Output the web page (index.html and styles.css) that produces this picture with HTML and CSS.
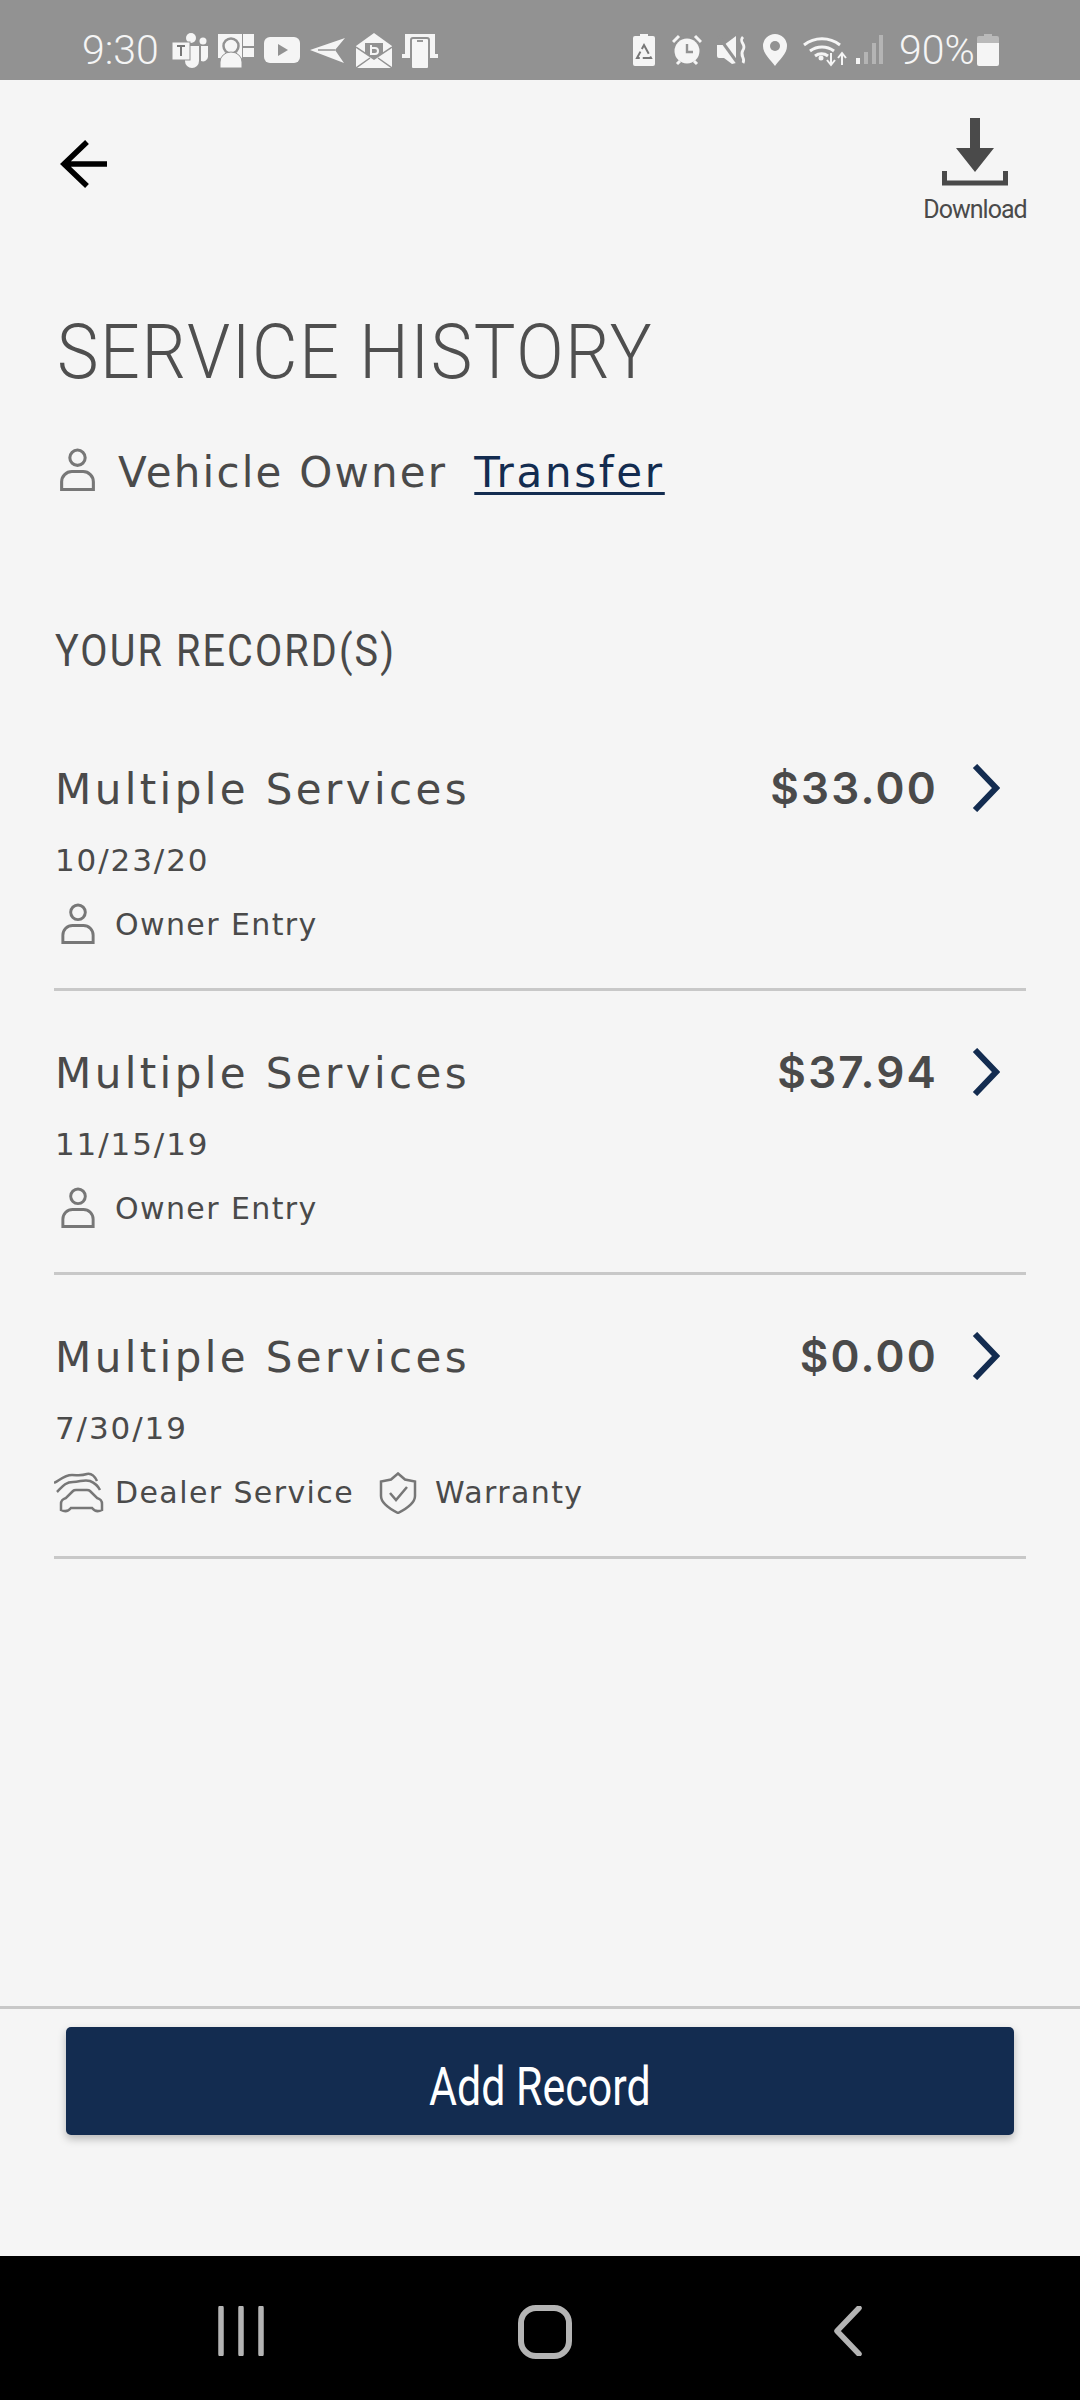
FILE: index.html
```html
<!DOCTYPE html>
<html lang="en">
<head>
<meta charset="utf-8">
<title>Service History</title>
<link rel="stylesheet" href="styles.css">
</head>
<body>
<div class="screen">
  <div class="status">
    <div class="status-left">
      <span class="clock">9:30</span>
      <svg class="si" viewBox="0 0 36 36"><circle cx="19" cy="5" r="5" fill="#f5f5f5"/><circle cx="31" cy="8" r="3.5" fill="#f5f5f5"/><path d="M13 13h14v15a7 7 0 0 1-14 0z" fill="#f5f5f5"/><path d="M29 13h7v11a5 5 0 0 1-7 4z" fill="#f5f5f5"/><rect x="0" y="9" width="18" height="18" fill="#f5f5f5" stroke="#929292"/><path d="M5 13h8M9 13v10" stroke="#777" stroke-width="2"/></svg>
      <svg class="si" viewBox="0 0 36 36"><path d="M0 1h24v24H0z" fill="#f5f5f5"/><path d="M25 1h11v12H25zM25 15h11v9H25z" fill="#f5f5f5"/><circle cx="13" cy="13" r="7.5" fill="#f5f5f5" stroke="#929292" stroke-width="2.5"/><path d="M2 35v-6a11 10 0 0 1 22 0v6z" fill="#f5f5f5" stroke="#929292" stroke-width="1"/></svg>
      <svg class="si" viewBox="0 0 36 36"><rect x="0" y="4" width="36" height="26" rx="6" fill="#f5f5f5"/><path d="M14 11l10 6-10 6z" fill="#929292"/></svg>
      <svg class="si" viewBox="0 0 36 36"><path d="M0 17L35 5 25 17l9 13z" fill="#f5f5f5"/><path d="M8 17h17" stroke="#929292" stroke-width="1.5"/></svg>
      <svg class="si" viewBox="0 0 36 36"><path d="M0 13L18 0l18 13v22H0z" fill="#f5f5f5"/><path d="M9 10h18v10l-9 6-9-6z" fill="#929292"/><path d="M0 14l18 12 18-12M0 35l14-10M36 35L22 25" stroke="#929292" stroke-width="1.5" fill="none"/><path d="M15 12v9h4a3 3 0 0 0 0-6h-4" stroke="#f5f5f5" stroke-width="2" fill="none"/></svg>
      <svg class="si" viewBox="0 0 36 36"><path d="M3 1h30v22H3z" fill="#f5f5f5"/><rect x="0" y="21" width="36" height="4" fill="#f5f5f5"/><rect x="9" y="5" width="18" height="31" rx="2" fill="#f5f5f5" stroke="#929292" stroke-width="2"/><path d="M15 8h6" stroke="#777" stroke-width="1.5"/></svg>
    </div>
    <div class="status-right">
      <svg class="si-bat" viewBox="0 0 22 32"><path d="M7 0h8v2h5a2 2 0 0 1 2 2v26a2 2 0 0 1-2 2H2a2 2 0 0 1-2-2V4a2 2 0 0 1 2-2h5z" fill="#f5f5f5"/><path d="M11 11l7 13H4z" fill="none" stroke="#777" stroke-width="2" stroke-dasharray="10 3"/></svg>
      <svg class="si-alarm" viewBox="0 0 30 32"><circle cx="15" cy="17" r="12.5" fill="#f5f5f5"/><path d="M15 10v8h6" stroke="#929292" stroke-width="2.4" fill="none"/><path d="M1 8l6-6M29 8l-6-6M5 30l3-3M25 30l-3-3" stroke="#f5f5f5" stroke-width="3"/></svg>
      <svg class="si-mute" viewBox="0 0 30 32"><path d="M0 11h7L19 2v27l-4 1-8-6H2a2 2 0 0 1-2-2z" fill="#f5f5f5"/><path d="M1 2l21 29" stroke="#929292" stroke-width="3"/><path d="M26 3c-5 5 4 7 0 13s3 8 0 13" stroke="#f5f5f5" stroke-width="2.8" fill="none"/></svg>
      <svg class="si-pin" viewBox="0 0 24 32"><path d="M12 0a12 12 0 0 1 12 12c0 8-8 14-12 20C8 26 0 20 0 12A12 12 0 0 1 12 0z" fill="#f5f5f5"/><circle cx="12" cy="12" r="5" fill="#929292"/></svg>
      <svg class="si-wifi" viewBox="0 0 44 34"><path d="M1 12a29 29 0 0 1 36 0M7 18a20 20 0 0 1 24 0M12 23a11 11 0 0 1 13 0" stroke="#f5f5f5" stroke-width="3" fill="none"/><circle cx="18" cy="25" r="2.5" fill="#f5f5f5"/><path d="M28 20v11m-4-4l4 5 4-5M39 32V20m-4 5l4-5 4 5" stroke="#f5f5f5" stroke-width="2" fill="none"/></svg>
      <svg class="si-sig" viewBox="0 0 28 32"><path d="M2 30v-6" stroke="#f5f5f5" stroke-width="4"/><path d="M10 30v-12M18 30V9M25 30V1" stroke="#b4b4b4" stroke-width="4"/></svg>
      <span class="pct">90%</span>
      <svg class="si-charge" viewBox="0 0 22 32"><path d="M7 0h8v2h5a2 2 0 0 1 2 2v5H0V4a2 2 0 0 1 2-2h5z" fill="#b9b9b9"/><path d="M0 9h22v21a2 2 0 0 1-2 2H2a2 2 0 0 1-2-2z" fill="#f5f5f5"/></svg>
    </div>
  </div>

  <header class="top">
    <svg class="back" viewBox="0 0 48 48"><path d="M47 24H4M27 2L4 24l23 22" fill="none" stroke="#000" stroke-width="5.5"/></svg>
    <div class="download">
      <svg class="download-icon" viewBox="0 0 66 68"><path d="M28 0h10v30h14L33 54 14 30h14z" fill="#4a4a4a"/><path d="M2.500 53v12h61V53" fill="none" stroke="#4a4a4a" stroke-width="5"/></svg>
      <span class="download-label">Download</span>
    </div>
  </header>

  <h1 class="title">SERVICE HISTORY</h1>

  <div class="owner">
    <svg class="person" viewBox="0 0 34 42"><circle cx="17" cy="9.500" r="7.500"/><path d="M1.500 40.500V33a10 10 0 0 1 10-10h11a10 10 0 0 1 10 10v7.500z"/></svg>
    <span class="owner-label">Vehicle Owner</span>
    <a class="transfer">Transfer</a>
  </div>

  <h2 class="section">YOUR RECORD(S)</h2>

  <section class="records">
    <article class="record">
      <div class="record-head">
        <span class="record-title">Multiple Services</span>
        <span class="price">$33.00</span>
        <svg class="chev" viewBox="0 0 28 48"><path d="M3 2l21 22L3 46" fill="none" stroke="#132c50" stroke-width="6"/></svg>
      </div>
      <div class="date">10/23/20</div>
      <div class="tags">
        <svg class="person" viewBox="0 0 34 42"><circle cx="17" cy="9.500" r="7.500"/><path d="M1.500 40.500V33a10 10 0 0 1 10-10h11a10 10 0 0 1 10 10v7.500z"/></svg>
        <span class="tag">Owner Entry</span>
      </div>
    </article>
    <article class="record">
      <div class="record-head">
        <span class="record-title">Multiple Services</span>
        <span class="price">$37.94</span>
        <svg class="chev" viewBox="0 0 28 48"><path d="M3 2l21 22L3 46" fill="none" stroke="#132c50" stroke-width="6"/></svg>
      </div>
      <div class="date">11/15/19</div>
      <div class="tags">
        <svg class="person" viewBox="0 0 34 42"><circle cx="17" cy="9.500" r="7.500"/><path d="M1.500 40.500V33a10 10 0 0 1 10-10h11a10 10 0 0 1 10 10v7.500z"/></svg>
        <span class="tag">Owner Entry</span>
      </div>
    </article>
    <article class="record">
      <div class="record-head">
        <span class="record-title">Multiple Services</span>
        <span class="price">$0.00</span>
        <svg class="chev" viewBox="0 0 28 48"><path d="M3 2l21 22L3 46" fill="none" stroke="#132c50" stroke-width="6"/></svg>
      </div>
      <div class="date">7/30/19</div>
      <div class="tags">
        <svg class="car" viewBox="0 0 50 42"><path d="M0 11C6 8 10 3 18 3c6 0 9 1 15-1 5-1 8 3 10 7"/><path d="M3 20C8 15 11 10 19 10c7 0 11-3 17-1 5 2 8 5 10 9"/><path d="M7 38V32C7 28 9 27 12 26L19 19Q20 18 22 18H33Q35 18 36 19L43 26C46 27 48 28 48 32V38Q42 41 38 36H17Q13 41 7 38Z"/></svg>
        <span class="tag">Dealer Service</span>
        <svg class="shield" viewBox="0 0 38 42"><path d="M19 1.500l7 6 10 2V24c0 7-9 13-17 17C11 37 2 31 2 24V9.500l10-2z"/><path d="M11 21l6 7 11-13"/></svg>
        <span class="tag">Warranty</span>
      </div>
    </article>
  </section>

  <footer class="footer">
    <button class="add"><span class="add-label">Add Record</span></button>
  </footer>

  <nav class="nav">
    <svg class="nav-recent" viewBox="0 0 46 50"><path d="M3 2v46M23 2v46M43 2v46" stroke="#b4b4b4" stroke-width="5.500" stroke-linecap="round"/></svg>
    <svg class="nav-home" viewBox="0 0 54 54"><rect x="3" y="3" width="48" height="48" rx="15" fill="none" stroke="#b4b4b4" stroke-width="6"/></svg>
    <svg class="nav-back" viewBox="0 0 28 50"><path d="M25 2L3 25l22 23" fill="none" stroke="#b4b4b4" stroke-width="5.500" stroke-linecap="round" stroke-linejoin="round"/></svg>
  </nav>
</div>
</body>
</html>
```

FILE: styles.css
```css
* { box-sizing: border-box; }
html, body { margin: 0; padding: 0; }
body { background: #f5f5f5; font-family: "DejaVu Sans", "Liberation Sans", sans-serif; color: #4a4a4a; }
.screen { width: 1080px; height: 2400px; display: flex; flex-direction: column; overflow: hidden; }

.status { height: 80px; flex: none; background: #929292; display: flex; justify-content: space-between; padding: 30px 81px 0 82px; color: #f5f5f5; }
.status-left { display: flex; align-items: flex-start; gap: 10px; }
.status-right { display: flex; align-items: flex-start; }
.clock { font: 300 41px/40px "Roboto", sans-serif; width: 80px; }
.pct { font: 300 41px/40px "Roboto", sans-serif; width: 78px; margin-left: 15px; }
.si { width: 36px; height: 36px; margin-top: 3px; }
.si-bat { width: 22px; height: 32px; margin-top: 4px; }
.si-alarm { width: 30px; height: 32px; margin: 4px 0 0 17px; }
.si-mute { width: 30px; height: 32px; margin: 4px 0 0 15px; }
.si-pin { width: 24px; height: 32px; margin: 4px 0 0 16px; }
.si-wifi { width: 44px; height: 34px; margin: 3px 0 0 16px; }
.si-sig { width: 28px; height: 32px; margin: 4px 0 0 9px; }
.si-charge { width: 22px; height: 32px; margin-top: 4px; }

.top { height: 150px; flex: none; display: flex; justify-content: space-between; padding: 0 54px 0 60px; }
.back { width: 48px; height: 48px; margin-top: 60px; }
.download { display: flex; flex-direction: column; align-items: center; padding-top: 38px; width: 102px; }
.download-icon { width: 66px; height: 68px; display: block; }
.download-label { font: 400 25px/30px "Roboto", sans-serif; margin-top: 9px; letter-spacing: -1px; }

.title { margin: 82px 0 -2px 57px; font: 300 76px/80px "Roboto", sans-serif; letter-spacing: 1.800px; color: #4f4f4f; transform: scaleX(.92); transform-origin: 0 50%; }

.owner { margin: 57px 0 0 60px; height: 50px; display: flex; align-items: center; gap: 23px; }
.owner .person { width: 35px; height: 43px; margin-top: -6px; }
.owner-label { font: 400 42px/50px "DejaVu Sans", sans-serif; letter-spacing: 2.2px; margin-top: 2px; }
.transfer { font: 400 42px/50px "DejaVu Sans", sans-serif; letter-spacing: 2.7px; color: #132c50; text-decoration: underline; text-underline-offset: 5px; text-decoration-thickness: 3px; margin: 2px 0 0 4px; }

.section { margin: 129px 0 0 55px; font: 400 45px/50px "Roboto", sans-serif; letter-spacing: 2.4px; transform: scaleX(.88); transform-origin: 0 50%; }

.records { margin: 31px 54px 0; }
.record { padding-top: 53px; padding-bottom: 40px; border-bottom: 3px solid #c8c8c8; }
.record-head { height: 56px; display: flex; align-items: center; padding-right: 26px; }
.record-title { font: 400 42px/56px "DejaVu Sans", sans-serif; letter-spacing: 3.4px; margin: 3px auto 0 1px; }
.price { font: 600 44px/56px "Inter", sans-serif; margin-right: 34px; letter-spacing: 2.2px; }
.chev { width: 28px; height: 48px; }
.date { margin: 24px 0 0 1px; font: 400 31px/40px "DejaVu Sans", sans-serif; letter-spacing: 1.9px; }
.tags { margin-top: 22px; height: 46px; display: flex; align-items: center; }
.tags .person { width: 34px; height: 41px; margin: -4px 0 0 7px; }
.person { fill: none; stroke: #777; stroke-width: 3; }
.tag { font: 400 30px/46px "DejaVu Sans", sans-serif; letter-spacing: 1.4px; margin-left: 20px; }
.car { width: 50px; height: 42px; fill: none; stroke: #777; stroke-width: 2.500; }
.car + .tag { margin-left: 11px; }
.shield { width: 38px; height: 42px; fill: none; stroke: #777; stroke-width: 2.500; margin-left: 25px; }
.shield + .tag { margin-left: 18px; }

.footer { margin-top: auto; height: 250px; flex: none; border-top: 3px solid #c8c8c8; padding: 18px 66px 0; }
.add { display: block; width: 100%; height: 108px; border: 0; border-radius: 5px; background: #132c50; color: #fff; font: 400 53px/1 "Roboto", sans-serif; box-shadow: 0 4px 8px rgba(0,0,0,.25); padding: 13px 0 0; }
.add-label { display: inline-block; transform: scaleX(.81); }

.nav { height: 144px; flex: none; background: #000; display: flex; align-items: flex-start; padding-top: 50px; }
.nav-recent { width: 46px; height: 50px; margin-left: 218px; }
.nav-home { width: 54px; height: 54px; margin: -1px 0 0 254px; }
.nav-back { width: 28px; height: 50px; margin-left: 262px; }
```
